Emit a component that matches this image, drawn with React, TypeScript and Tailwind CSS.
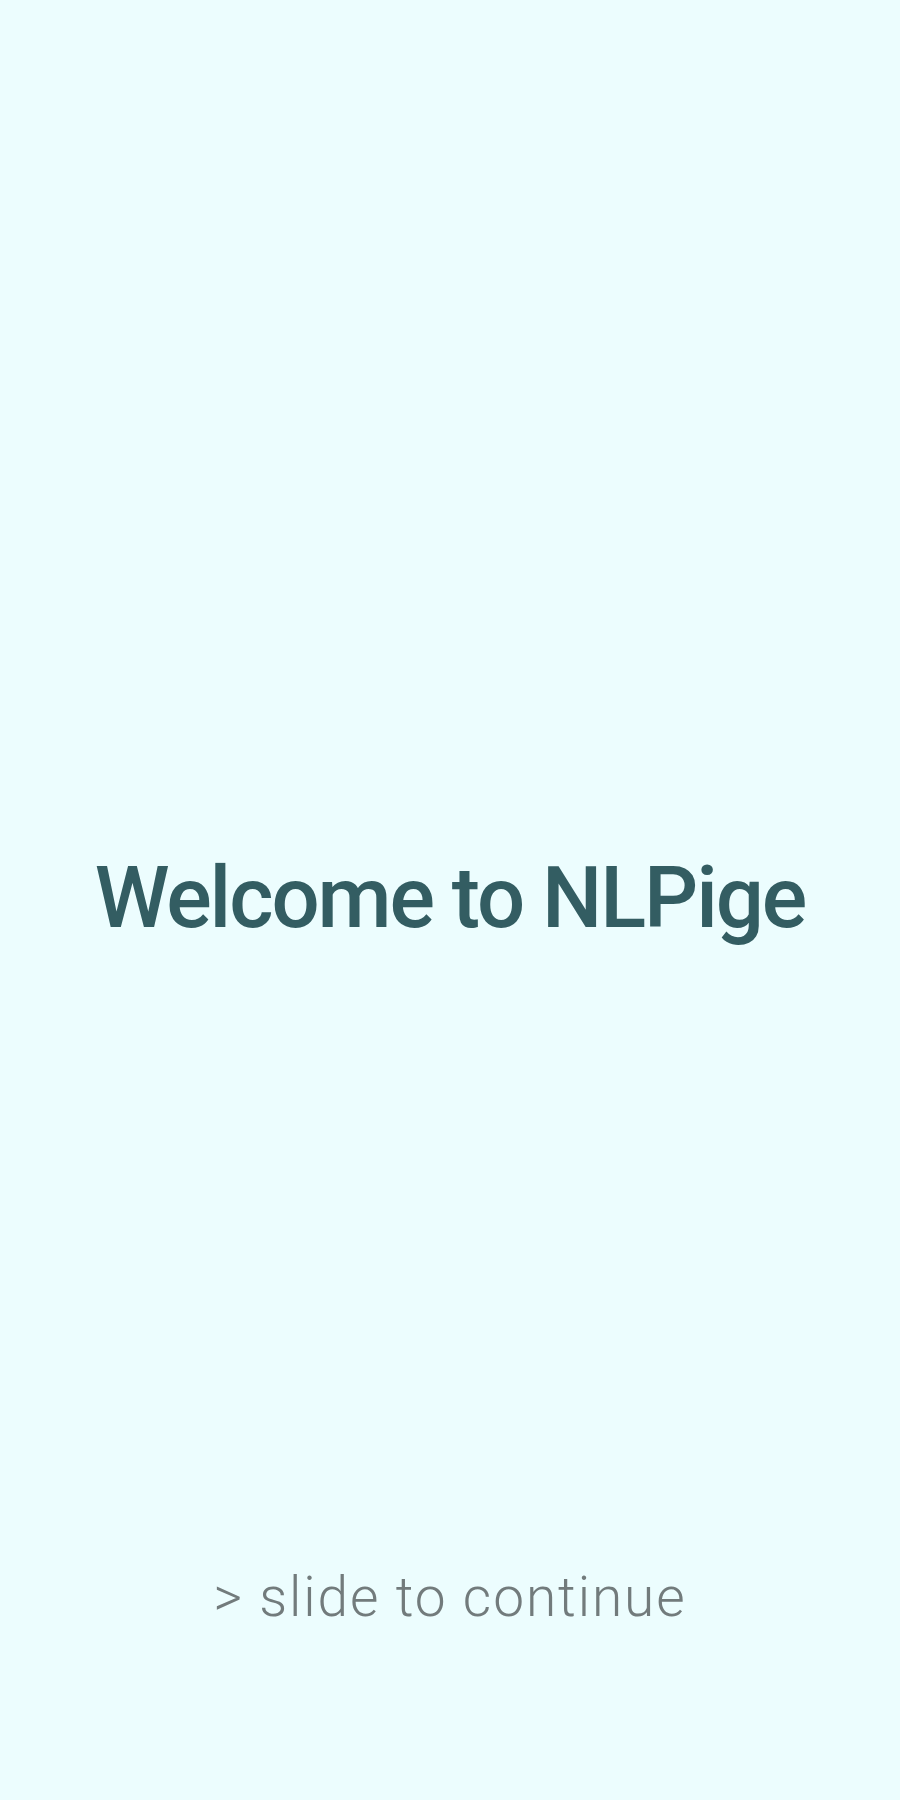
export default function App() {
  return (
    <div
      className="relative flex min-h-screen flex-col items-center bg-[#ecfdfe]"
      style={{ fontFamily: "Roboto, 'Liberation Sans', sans-serif" }}
    >
      <div className="flex flex-1 items-center justify-center pt-[226px]">
        <h1 className="text-[85px] font-medium leading-none tracking-[-0.025em] text-[#335d62]">Welcome to NLPige</h1>
      </div>
      <div className="pb-[175px] text-[55px] font-light leading-none tracking-[0.035em] text-[#727b7c]">&gt; slide to continue</div>
    </div>
  );
}
